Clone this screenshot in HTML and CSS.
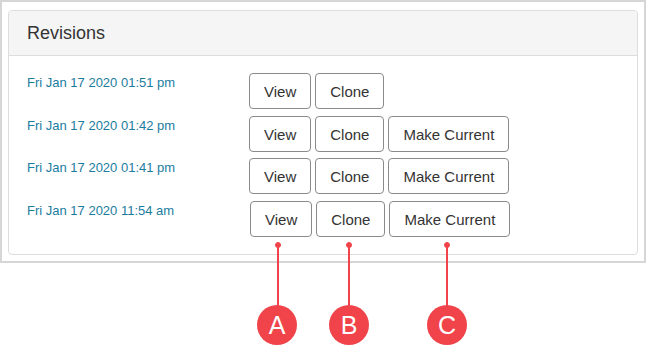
FILE: index.html
```html
<!DOCTYPE html>
<html lang="en">
<head>
    <meta charset="UTF-8">
    <title>Revisions</title>
    <link rel="stylesheet" href="styles.css">
</head>
<body>
    <div class="frame">
        <div class="panel">
            <div class="panel-heading">Revisions</div>
            <div class="panel-body">
                <div class="revision">
                    <a class="revision-date" href="#">Fri Jan 17 2020 01:51 pm</a>
                    <div class="actions">
                        <button class="btn">View</button>
                        <button class="btn">Clone</button>
                    </div>
                </div>
                <div class="revision tight">
                    <a class="revision-date" href="#">Fri Jan 17 2020 01:42 pm</a>
                    <div class="actions">
                        <button class="btn">View</button>
                        <button class="btn">Clone</button>
                        <button class="btn">Make Current</button>
                    </div>
                </div>
                <div class="revision">
                    <a class="revision-date" href="#">Fri Jan 17 2020 01:41 pm</a>
                    <div class="actions">
                        <button class="btn">View</button>
                        <button class="btn">Clone</button>
                        <button class="btn">Make Current</button>
                    </div>
                </div>
                <div class="revision">
                    <a class="revision-date" href="#">Fri Jan 17 2020 11:54 am</a>
                    <div class="actions shifted">
                        <button class="btn">View</button>
                        <button class="btn">Clone</button>
                        <button class="btn">Make Current</button>
                    </div>
                </div>
            </div>
        </div>
    </div>

    <!-- callout markers -->
    <svg class="callouts" width="647" height="347" viewBox="0 0 647 347">
        <g fill="#f0444a" stroke="#f0444a">
            <line x1="278" y1="245" x2="278" y2="310" stroke-width="2"/>
            <line x1="349" y1="245" x2="349" y2="310" stroke-width="2"/>
            <line x1="447" y1="245" x2="447" y2="310" stroke-width="2"/>
            <circle cx="278" cy="245" r="2.5"/>
            <circle cx="349" cy="245" r="2.5"/>
            <circle cx="447" cy="245" r="2.5"/>
            <circle cx="277" cy="325" r="20" stroke="none"/>
            <circle cx="349" cy="325" r="20" stroke="none"/>
            <circle cx="447" cy="325" r="20" stroke="none"/>
        </g>
        <g class="callout-label" fill="#fff" text-anchor="middle">
            <text x="277" y="334">A</text>
            <text x="349" y="334">B</text>
            <text x="447" y="334">C</text>
        </g>
    </svg>
</body>
</html>
```

FILE: styles.css
```css
* {
    box-sizing: border-box;
}

html, body {
    margin: 0;
    padding: 0;
    background: #fff;
    font-family: 'Liberation Sans', Arial, sans-serif;
}

body {
    position: relative;
    width: 647px;
    height: 347px;
    overflow: hidden;
}

/* FRAME */
.frame {
    width: 646px;
    border: 2px solid #d6d6d6;
    padding: 8px 6px 6px 6px;
    background: #fff;
}

/* PANEL */
.panel {
    border: 1px solid #dddddd;
    border-radius: 4px;
    overflow: hidden;
}

.panel-heading {
    height: 45px;
    padding: 0 18px;
    display: flex;
    align-items: center;
    background-color: #f5f5f5;
    border-bottom: 1px solid #dddddd;
    color: #333;
    font-size: 18px;
}

.panel-body {
    padding: 17px 0 17px 18px;
}

.revision {
    display: flex;
    align-items: flex-start;
    margin-bottom: 7px;
}

.revision.tight {
    margin-bottom: 6px;
}

.revision:last-child {
    margin-bottom: 0;
}

.revision-date {
    width: 222px;
    padding-top: 2px;
    font-size: 13px;
    line-height: 15px;
    color: #1b7ca0;
    text-decoration: none;
}

.actions {
    display: flex;
    gap: 4px;
}

.actions.shifted {
    margin-left: 1px;
}

.btn {
    height: 36px;
    padding: 0 14px;
    border: 1px solid #8a8a8a;
    border-radius: 4px;
    background-color: #fff;
    color: #333;
    font-family: inherit;
    font-size: 15px;
    cursor: pointer;
}

.btn:hover {
    background-color: #e6e6e6;
}

/* CALLOUTS */
.callouts {
    position: absolute;
    top: 0;
    left: 0;
    pointer-events: none;
}

.callout-label {
    font-family: 'Liberation Sans', Arial, sans-serif;
    font-size: 25px;
}
```
